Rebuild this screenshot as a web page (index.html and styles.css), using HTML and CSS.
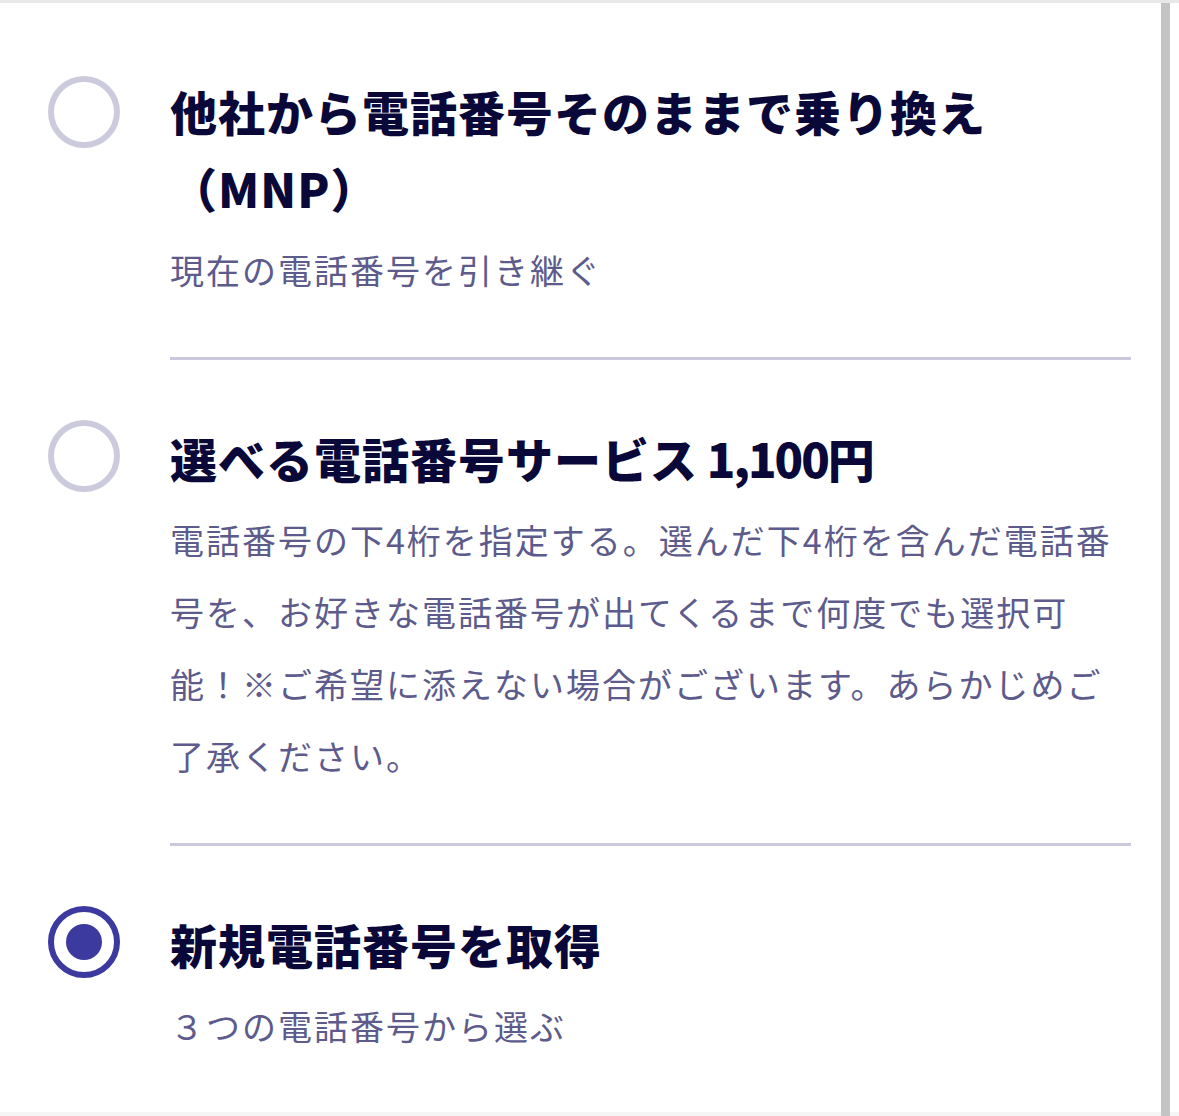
FILE: index.html
```html
<!DOCTYPE html>
<html lang="ja">
<head>
  <meta charset="UTF-8" />
  <meta name="viewport" content="width=device-width, initial-scale=1.0"/>
  <title>電話番号の選択</title>
  <link rel="stylesheet" href="styles.css">
</head>
<body>
  <div class="frame">
    <main class="options">
      <label class="option">
        <span class="radio"></span>
        <div class="option-body">
          <h2 class="option-title">他社から電話番号そのままで乗り換え（MNP）</h2>
          <p class="option-text">現在の電話番号を引き継ぐ</p>
        </div>
      </label>

      <label class="option">
        <span class="radio"></span>
        <div class="option-body">
          <h2 class="option-title">選べる電話番号サービス<span class="price"> 1,100</span>円</h2>
          <p class="option-text">電話番号の下4桁を指定する。選んだ下4桁を含んだ電話番号を、お好きな電話番号が出てくるまで何度でも選択可能！※ご希望に添えない場合がございます。あらかじめご了承ください。</p>
        </div>
      </label>

      <label class="option">
        <span class="radio checked"></span>
        <div class="option-body">
          <h2 class="option-title">新規電話番号を取得</h2>
          <p class="option-text">３つの電話番号から選ぶ</p>
        </div>
      </label>
    </main>
    <div class="scrollbar"></div>
  </div>
</body>
</html>
```

FILE: styles.css
```css
body {
  margin: 0;
  background: #fff;
  font-family: "Noto Sans CJK JP", "Noto Sans", sans-serif;
  overflow: hidden;
}
.frame {
  display: flex;
  height: 1116px;
  box-sizing: border-box;
  border-top: 3px solid #e8e8e8;
  border-bottom: 4px solid #f5f5f5;
}
.options {
  flex: 1;
  padding: 10px 30px 0 48px;
}
.scrollbar {
  width: 9px;
  margin-right: 9px;
  margin-bottom: -4px;
  background: #c4c4c4;
}
.option {
  display: flex;
  align-items: flex-start;
  cursor: pointer;
}
.radio {
  flex: none;
  width: 72px;
  height: 72px;
  box-sizing: border-box;
  margin-top: 60px;
  border: 6px solid #cccbdd;
  border-radius: 50%;
  display: flex;
  align-items: center;
  justify-content: center;
}
.option:first-child .radio {
  margin-top: 63px;
}
.radio.checked {
  border-color: #3d3a9f;
}
.radio.checked::after {
  content: "";
  width: 36px;
  height: 36px;
  border-radius: 50%;
  background: #3d3a9f;
}
.option-body {
  flex: 1;
  margin-left: 50px;
  padding: 59px 0 51px;
  border-bottom: 3px solid #cac8dc;
}
.option:last-child .option-body {
  border-bottom: none;
}
.option-title {
  margin: 0;
  font-size: 47px;
  font-weight: 900;
  line-height: 77px;
  letter-spacing: 1px;
  color: #0a0838;
}
.price {
  letter-spacing: -2px;
}
.option-text {
  margin: 8px 0 0;
  font-size: 34px;
  line-height: 72px;
  letter-spacing: 2px;
  color: #5d5b8c;
}
```
